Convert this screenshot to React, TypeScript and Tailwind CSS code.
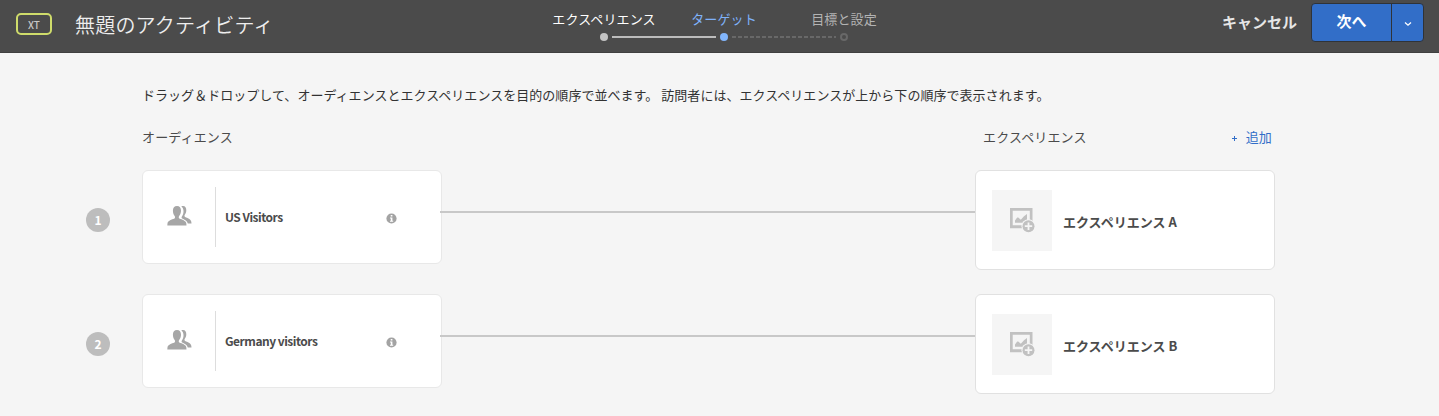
import React from "react";

const rows = [
  { id: 1, audience: "US Visitors", experience: "エクスペリエンス A" },
  { id: 2, audience: "Germany visitors", experience: "エクスペリエンス B" },
];

function PeopleIcon() {
  return (
    <svg width="25" height="20" viewBox="0 0 25 20" className="block">
      <path
        fill="#a6a6a6"
        d="M10 0C7.300 0 5.900 1.900 5.900 4.700c0 2.100.7 3.900 1.800 5.300.5.700.5 2.100-.2 2.500C4.600 13.700 1 14.600.5 17.200L.3 19.500h19.200l-.2-2.300c-.5-2.600-4.100-3.500-7-4.700-.7-.4-.7-1.800-.2-2.500 1.100-1.400 1.900-3.200 1.900-5.300C14 1.900 12.700 0 10 0z"
      />
      <path
        fill="#a6a6a6"
        d="M14.300.6C14.900.2 15.400.1 16 .1c2.300 0 3.300 1.800 3.300 4.100 0 1.900-.6 3.300-1.500 4.500-.5.700-.4 1.900.3 2.300 2.500 1.200 5.600 1.900 6.200 4.700l.2 1.700h-3.700c-.6-2.700-3-3.700-5.600-4.900-.7-.4-.8-1.400-.3-2.100 1.100-1.500 1.700-3.500 1.600-5.500C16.400 3 15.700 1.500 14.300.6z"
      />
    </svg>
  );
}

function InfoIcon() {
  return (
    <svg width="11" height="11" viewBox="0 0 11 11" className="block">
      <circle cx="5.500" cy="5.500" r="5.100" fill="#a3a3a3" />
      <path fill="#fff" d="M4.700 2h1.700v1.500H4.700zM4 4.500h2.400v3.200H7.200v1H4v-1h.8V5.500H4z" />
    </svg>
  );
}

function ImageAddIcon() {
  return (
    <svg width="25" height="25" viewBox="0 0 25 25" className="block">
      <path fill="#c1c1c1" fillRule="evenodd" d="M0 0h22.500v17.500h-2.700V2.700H2.700v14.600h10v2.900H0z" />
      <path fill="#c1c1c1" d="M5 14.800v-2.300l2-2.700c.5-.5 1.100-.5 1.600 0l2.200 2 3.200-3.500 3-2.300v6L12.500 14.800z" />
      <circle cx="18.500" cy="18.200" r="7" fill="#f5f5f5" />
      <circle cx="18.500" cy="18.200" r="6" fill="#c1c1c1" />
      <path fill="#f5f5f5" d="M17.600 14.500h1.800v2.800h2.800v1.800h-2.800v2.800h-1.800v-2.800h-2.800v-1.800h2.800z" />
    </svg>
  );
}

function Steps() {
  return (
    <div className="flex w-[360px] shrink-0 flex-col pt-[9px]">
      <div className="grid grid-cols-3 text-center text-[13px] leading-[20px] tracking-[0.12px] whitespace-nowrap">
        <span className="text-white">エクスペリエンス</span>
        <span className="text-[#7fb2fa]">ターゲット</span>
        <span className="text-[#b3b3b3]">目標と設定</span>
      </div>
      <div className="mt-[4px] flex h-2 items-center justify-center">
        <span className="size-2 rounded-full bg-[#c4c4c4]" />
        <span className="mx-1 h-[2px] w-[104px] bg-[#bcbcbc]" />
        <span className="size-2 rounded-full bg-[#82b6fd]" />
        <svg width="104" height="2" className="mx-1">
          <path d="M0 1H104" stroke="#686868" strokeWidth="2" strokeDasharray="4 2" />
        </svg>
        <span className="size-2 rounded-full border-2 border-[#686868]" />
      </div>
    </div>
  );
}

export default function App() {
  return (
    <div className="h-[416px] w-[1439px] overflow-hidden bg-[#f5f5f5] font-['Noto_Sans_CJK_JP',sans-serif] text-[#4b4b4b]">
      <header className="flex h-[53px] border-b border-[#404040] bg-[#4b4b4b]">
        <div className="flex w-[544px] shrink-0 pl-4">
          <span className="mt-[13px] flex h-[22px] w-9 items-center justify-center rounded-[5px] border-2 border-[#cfdc6b] text-[10px] font-medium text-[#c8c8c8]">
            XT
          </span>
          <h1 className="ml-[23px] pt-[10px] text-[20px] leading-[29px] font-[350] tracking-[0.2px] text-[#eeeeee]">無題のアクティビティ</h1>
        </div>
        <Steps />
        <div className="ml-auto flex pt-[3px] pr-[15px]">
          <button className="mr-[14px] h-[38px] text-[15px] font-bold text-[#e6e6e6]">キャンセル</button>
          <div className="flex h-[39px] w-[113px] overflow-hidden rounded-[4px] border border-[#2f3338] bg-[#326ec8]">
            <button className="w-[80px] border-r border-[#2f3338] pb-[2px] text-[15px] font-bold text-white">次へ</button>
            <button className="flex flex-1 items-center justify-center pt-[3px]">
              <svg width="8" height="6" viewBox="0 0 8 6">
                <path d="M1 1.500l3 2.700 3-2.700" fill="none" stroke="#fff" strokeWidth="1.300" />
              </svg>
            </button>
          </div>
        </div>
      </header>

      <main className="pr-[164px] pl-[86px]">
        <p className="pt-[32px] pl-14 text-[13px] leading-[20px] tracking-[0.035px] whitespace-nowrap text-[#323232]">
          ドラッグ＆ドロップして、オーディエンスとエクスペリエンスを目的の順序で並べます。 訪問者には、エクスペリエンスが上から下の順序で表示されます。
        </p>
        <div className="mt-[22px] flex h-5 pr-[3px] pl-14 text-[13px] leading-[20px] tracking-[0.15px]">
          <span className="w-[841px]">オーディエンス</span>
          <span>エクスペリエンス</span>
          <button className="ml-auto flex items-center text-[#326ec8]">
            <svg width="5" height="5" viewBox="0 0 5 5" className="mt-[2px] mr-[9px]">
              <path d="M0 2.500h5M2.500 0v5" stroke="#326ec8" strokeWidth="1" />
            </svg>
            追加
          </button>
        </div>
        <div className="mt-[23px] flex flex-col gap-6">
          {rows.map((row) => (
            <div key={row.id} className="flex h-[100px] w-[1189px] items-start">
              <span className="mt-[38px] mr-8 flex size-6 shrink-0 items-center justify-center rounded-full bg-[#bdbdbd] text-[12px] font-bold text-white">
                {row.id}
              </span>
              <div className="flex h-[94px] w-[300px] shrink-0 items-center rounded-[6px] border border-[#e8e8e8] bg-white">
                <div className="flex h-[60px] w-[73px] justify-end border-r border-[#dddddd] pt-[19px] pr-[23px]">
                  <PeopleIcon />
                </div>
                <span className="w-[162px] pl-[9px] text-[12px] leading-[18px] font-bold tracking-[-0.5px]">{row.audience}</span>
                <span className="ml-2 pt-[3px]">
                  <InfoIcon />
                </span>
              </div>
              <span className="mt-[41px] -ml-[2px] h-[2px] flex-1 bg-[#c8c8c8]" />
              <div className="flex h-[100px] w-[300px] shrink-0 items-center rounded-[6px] border border-[#e1e1e1] bg-white pl-4">
                <div className="flex h-[61px] w-[60px] items-center justify-center bg-[#f5f5f5]">
                  <ImageAddIcon />
                </div>
                <span className="ml-[11px] pt-1 text-[13px] leading-[20px] font-bold">{row.experience}</span>
              </div>
            </div>
          ))}
        </div>
      </main>
    </div>
  );
}
